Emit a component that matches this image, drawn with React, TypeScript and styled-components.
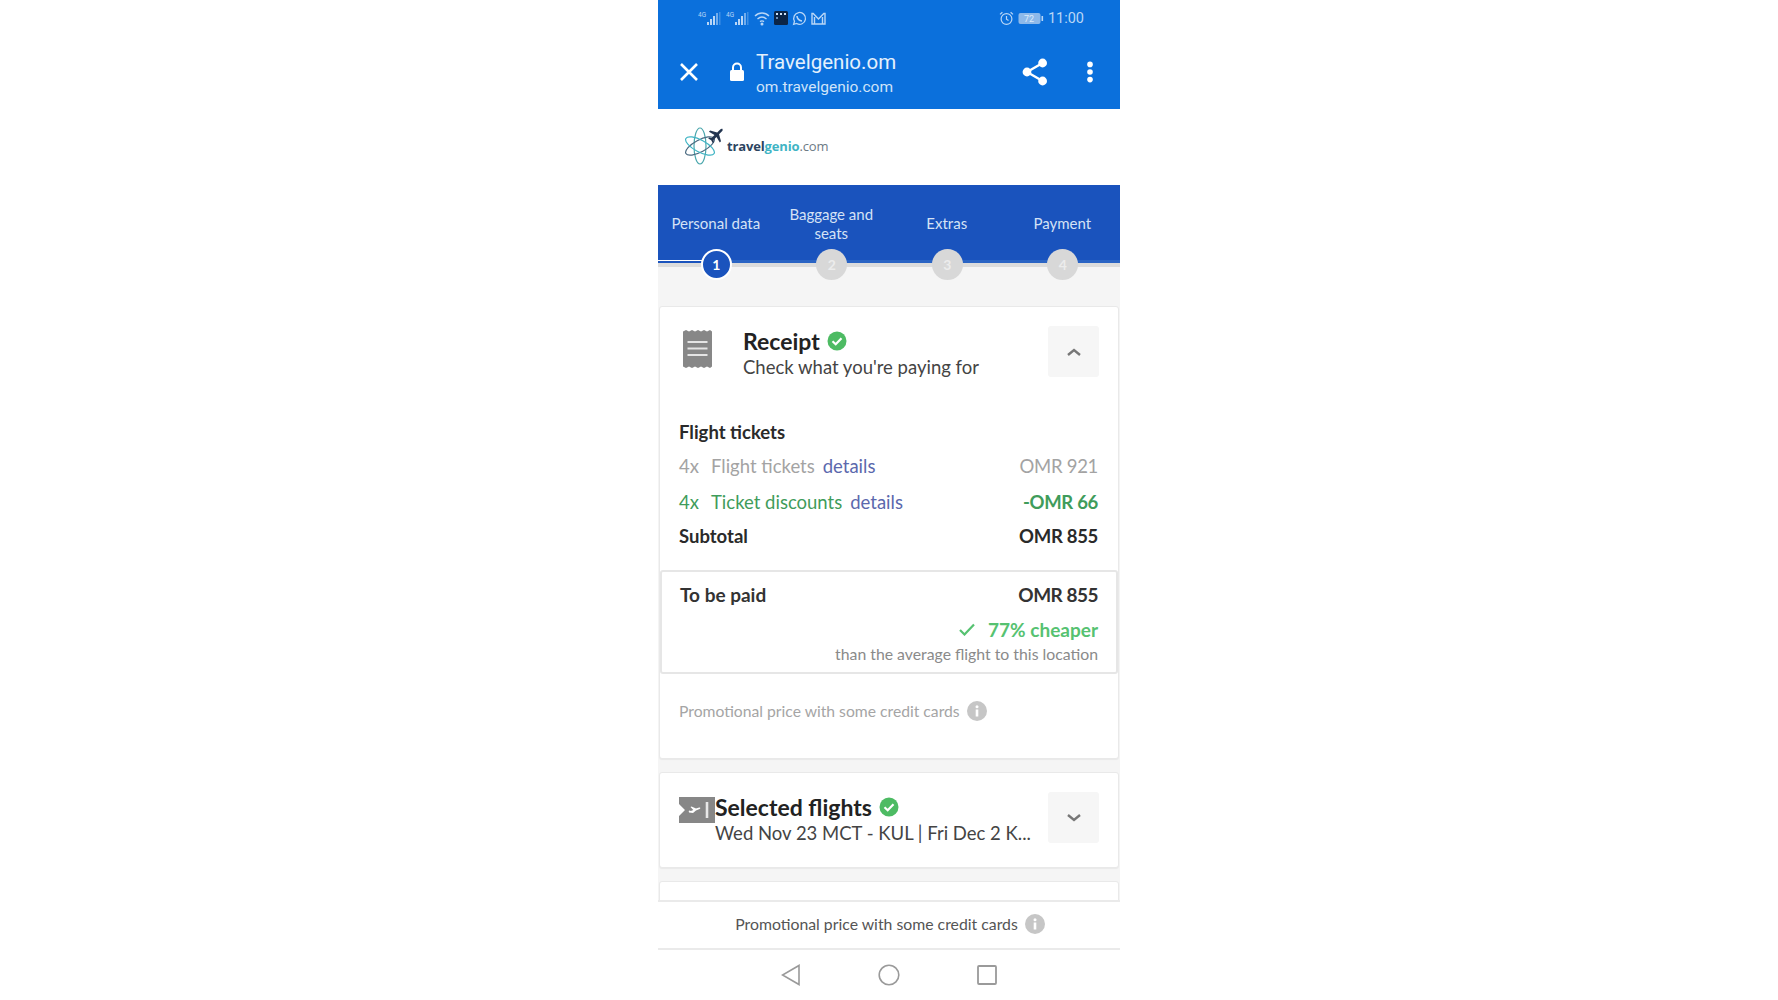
import React from 'react'
import styled, { createGlobalStyle } from 'styled-components'

const GlobalStyle = createGlobalStyle`
  html, body { margin: 0; padding: 0; background: #fff; }
  * { box-sizing: border-box; }
  body { font-family: Lato, "Noto Sans", sans-serif; }
`

const Page = styled.div`
  width: 100%;
  height: 1000px;
  display: flex;
  justify-content: center;
  overflow: hidden;
  background: #fff;
`

const Phone = styled.div`
  width: 462px;
  height: 1000px;
  display: flex;
  flex-direction: column;
  background: #f5f5f5;
  overflow: hidden;
`

const BrowserHeader = styled.header`
  height: 109px;
  flex: none;
  background: #0b70dc;
  color: #fff;
  display: flex;
  flex-direction: column;
`

const StatusBar = styled.div`
  height: 36px;
  padding: 0 36px 0 40px;
  display: flex;
  align-items: center;
  justify-content: space-between;
  color: #b9d6f6;
  font-family: Roboto, sans-serif;
  font-size: 14.5px;
`

const StatusGroup = styled.div`
  display: flex;
  align-items: center;
  gap: 4px;
`

const AppBar = styled.div`
  flex: 1;
  display: flex;
  align-items: center;
  padding: 0 26px 2px 20px;
  font-family: Roboto, sans-serif;
`

const CloseSlot = styled.span`
  display: flex;
  margin-right: 29px;
`

const ShareSlot = styled.span`
  display: flex;
  margin-right: 38px;
`

const UrlBlock = styled.div`
  flex: 1;
  margin: 3px 0 0 11px;
  display: flex;
  flex-direction: column;
  gap: 4px;
`

const SiteTitle = styled.div`
  font-size: 20.5px;
  line-height: 24px;
  color: #e4f0fc;
`

const SiteUrl = styled.div`
  font-size: 15.5px;
  line-height: 19px;
  color: #cfe3f9;
`

const LogoBar = styled.div`
  height: 76px;
  flex: none;
  background: #fff;
  display: flex;
  align-items: center;
  padding: 0 0 2px 26px;
  gap: 3px;
`

const LogoText = styled.div`
  font-family: "Open Sans", sans-serif;
  font-size: 13px;
  font-weight: 700;
  color: #2c4460;
  letter-spacing: -0.15px;
`

const LogoAccent = styled.span`
  color: #3fb4c4;
`

const LogoDomain = styled.span`
  font-weight: 400;
  color: #6d7a85;
`

const Stepper = styled.nav`
  height: 78px;
  flex: none;
  background: #1a53bd;
  display: grid;
  grid-template-columns: repeat(4, 1fr);
  position: relative;
  border-bottom: 3px solid #2a64c4;
`

const ProgressLine = styled.div`
  position: absolute;
  left: 0;
  bottom: -3px;
  width: 58px;
  height: 3px;
  background: #1a53bd;
  border-top: 1px solid #fff;
`

const TrackShadow = styled.div`
  height: 4px;
  flex: none;
  background: #dcdcdc;
`

const Step = styled.div`
  position: relative;
  display: flex;
  align-items: center;
  justify-content: center;
  text-align: center;
  padding: 2px 12px 0;
  height: 100%;
  color: #d5e2f5;
  font-size: 15px;
  line-height: 19px;
`

const StepDot = styled.span<{ $active?: boolean }>`
  position: absolute;
  left: 50%;
  bottom: -20px;
  width: 31px;
  height: 31px;
  margin-left: -15px;
  border-radius: 50%;
  display: flex;
  align-items: center;
  justify-content: center;
  font-size: 14px;
  font-weight: 700;
  z-index: 1;
  color: ${p => (p.$active ? '#fff' : '#ececec')};
  background: ${p => (p.$active ? '#1a53bd' : '#d8d8d8')};
  border: ${p => (p.$active ? '2px solid #fff' : 'none')};
`

const Scroll = styled.main`
  flex: 1;
  min-height: 0;
  padding: 39px 1px 0;
  display: flex;
  flex-direction: column;
  gap: 13px;
  overflow: hidden;
`

const Card = styled.section`
  flex: none;
  background: #fff;
  border: 1px solid #e9e9e9;
  border-radius: 3px;
  box-shadow: 0 1px 1px rgba(0, 0, 0, 0.05);
`

const ReceiptCard = styled(Card)`
  height: 453px;
  display: flex;
  flex-direction: column;
`

const FlightsCard = styled(Card)`
  height: 96px;
`

const StubCard = styled(Card)`
  height: 30px;
`

const CardHead = styled.div<{ $tight?: boolean }>`
  display: flex;
  align-items: flex-start;
  padding: ${p => (p.$tight ? '19px 19px 0 19px' : '19px 19px 0 23px')};
`

const HeadIcon = styled.div<{ $tight?: boolean }>`
  flex: none;
  width: ${p => (p.$tight ? '36px' : '60px')};
  padding-top: ${p => (p.$tight ? '5px' : '4px')};
`

const HeadText = styled.div`
  flex: 1;
  min-width: 0;
`

const TitleRow = styled.div`
  display: flex;
  align-items: center;
  gap: 7px;
  font-size: 23px;
  line-height: 30px;
  font-weight: 700;
  color: #222;
`

const Subtitle = styled.div`
  font-size: 18.5px;
  line-height: 23px;
  color: #444;
  white-space: nowrap;
`

const Toggle = styled.button`
  width: 51px;
  height: 51px;
  flex: none;
  border: none;
  background: #f6f6f6;
  border-radius: 3px;
  display: flex;
  align-items: center;
  justify-content: center;
  padding: 0;
`

const Lines = styled.div`
  padding: 41px 20px 0 19px;
`

const SectionTitle = styled.div`
  font-size: 18.5px;
  font-weight: 700;
  line-height: 24px;
  color: #2a2a2a;
  margin-bottom: 4px;
`

const Row = styled.div<{ $tone?: 'muted' | 'green' | 'dark' }>`
  display: flex;
  align-items: center;
  height: ${p => (p.$tone === 'dark' ? '32px' : '36px')};
  font-size: 18.5px;
  color: ${p => (p.$tone === 'green' ? '#3f9c5b' : p.$tone === 'dark' ? '#2a2a2a' : '#a3a3a3')};
  font-weight: ${p => (p.$tone === 'dark' ? 700 : 400)};
`

const Qty = styled.span`
  width: 32px;
  flex: none;
`

const DetailsLink = styled.a`
  color: #5b68ad;
  margin-left: 8px;
`

const Amount = styled.span<{ $bold?: boolean }>`
  margin-left: auto;
  font-weight: ${p => (p.$bold ? 700 : 400)};
  letter-spacing: -0.3px;
`

const PaidBox = styled.div`
  margin: 18px 0 0 0;
  height: 104px;
  flex: none;
  border: 2px solid #e6e6e6;
  border-radius: 3px;
  padding: 9px 18px 0 18px;
`

const PaidRow = styled.div`
  display: flex;
  justify-content: space-between;
  font-size: 19px;
  font-weight: 700;
  line-height: 27px;
  color: #333;
`

const PaidAmount = styled.span`
  letter-spacing: -0.5px;
`

const CheaperRow = styled.div`
  margin-top: 8px;
  display: flex;
  justify-content: flex-end;
  align-items: center;
  gap: 13px;
  font-size: 19px;
  line-height: 27px;
  font-weight: 700;
  color: #56c271;
`

const CheaperNote = styled.div`
  text-align: right;
  font-size: 15.8px;
  line-height: 22px;
  color: #8a8a8a;
`

const PromoLine = styled.div`
  display: flex;
  align-items: center;
  gap: 7px;
  padding: 25px 20px 0 19px;
  font-size: 15.7px;
  line-height: 24px;
  color: #a5a5a5;
`

const FooterBar = styled.div`
  height: 50px;
  flex: none;
  background: #fff;
  border-top: 2px solid #eaeaea;
  border-bottom: 2px solid #eaeaea;
  display: flex;
  align-items: center;
  justify-content: center;
  gap: 7px;
  font-size: 15.8px;
  color: #555;
  padding: 0 0 3px 2px;
`

const NavBar = styled.div`
  height: 50px;
  flex: none;
  background: #fff;
  display: grid;
  grid-template-columns: 98px 98px 98px;
  justify-content: center;
  justify-items: center;
  align-items: center;
`

const Signal = () => (
  <svg width="24" height="15" viewBox="0 0 24 15" fill="currentColor">
    <text x="0" y="6" fontSize="6.5" fontFamily="Roboto">4G</text>
    <rect x="9" y="11" width="2" height="3" />
    <rect x="12" y="8" width="2" height="6" />
    <rect x="15" y="5" width="2" height="9" />
    <rect x="18" y="2" width="2" height="12" opacity=".6" />
    <rect x="21" y="1" width="1.5" height="13" opacity=".3" />
  </svg>
)

const Wifi = () => (
  <svg width="16" height="15" viewBox="0 0 16 15" fill="none" stroke="currentColor" strokeWidth="1.4">
    <path d="M1 5c4-4 10-4 14 0M3.5 8c3-2.6 6-2.6 9 0M6 10.6c1.4-1 2.6-1 4 0" />
    <circle cx="8" cy="13" r=".8" fill="currentColor" />
  </svg>
)

const AppTile = () => (
  <svg width="14" height="14" viewBox="0 0 14 14">
    <rect width="14" height="14" rx="1.5" fill="#0b2547" />
    <rect x="2" y="2" width="2" height="2" fill="#cfe3f9" />
    <rect x="6" y="2" width="2" height="2" fill="#cfe3f9" />
    <rect x="10" y="2" width="2" height="2" fill="#cfe3f9" />
    <rect x="2" y="6" width="2" height="2" fill="#6f8fb5" />
  </svg>
)

const Whatsapp = () => (
  <svg width="15" height="15" viewBox="0 0 15 15" fill="none" stroke="currentColor" strokeWidth="1.3">
    <path d="M1.6 13.4l.9-3.1a5.9 5.9 0 1 1 2.2 2.2z" />
    <path d="M5 5c0 2.4 2.2 4.8 5 5" strokeWidth="1.6" />
  </svg>
)

const Gmail = () => (
  <svg width="15" height="13" viewBox="0 0 15 13" fill="none" stroke="currentColor" strokeWidth="1.4">
    <path d="M1 12V1.500h1.200L7.500 7l5.300-5.500H14V12zM3.500 12V5M11.500 12V5" />
  </svg>
)

const Alarm = () => (
  <svg width="15" height="15" viewBox="0 0 15 15" fill="none" stroke="currentColor" strokeWidth="1.2">
    <circle cx="7.5" cy="8" r="5.4" />
    <path d="M7.5 5v3.2l2 1.2M1 3.4 3.4 1.2M14 3.4 11.6 1.2" />
  </svg>
)

const Battery = () => (
  <svg width="26" height="13" viewBox="0 0 26 13">
    <rect x="0.5" y="1" width="22" height="11" rx="2" fill="#8db9ea" />
    <rect x="23.5" y="4" width="1.6" height="5" fill="#b9d6f6" />
    <text x="6" y="10" fontSize="9" fontFamily="Roboto" fill="#dcebfb">72</text>
  </svg>
)

const CloseIcon = () => (
  <svg width="22" height="22" viewBox="0 0 22 22" stroke="#fff" strokeWidth="2.6" fill="none">
    <path d="M3 3l16 16M19 3 3 19" />
  </svg>
)

const LockIcon = () => (
  <svg width="16" height="20" viewBox="0 0 16 20" fill="#fff">
    <path d="M4 9V5.600a4 4 0 0 1 8 0V9" fill="none" stroke="#fff" strokeWidth="2" />
    <rect x="1" y="8" width="14" height="11" rx="1.5" />
  </svg>
)

const ShareIcon = () => (
  <svg width="26" height="28" viewBox="0 0 26 28" fill="#fff">
    <circle cx="5" cy="14" r="4.4" />
    <circle cx="20.6" cy="5" r="4.4" />
    <circle cx="20.6" cy="23" r="4.4" />
    <path d="M5 14 20.6 5M5 14l15.6 9" stroke="#fff" strokeWidth="2.4" />
  </svg>
)

const DotsIcon = () => (
  <svg width="8" height="22" viewBox="0 0 8 22" fill="#fff">
    <circle cx="4" cy="3.4" r="2.8" />
    <circle cx="4" cy="11" r="2.8" />
    <circle cx="4" cy="18.6" r="2.8" />
  </svg>
)

const AtomLogo = () => (
  <svg width="40" height="38" viewBox="0 0 40 38" fill="none">
    <g transform="translate(16 19)" strokeWidth="1.2">
      <ellipse rx="6" ry="18" stroke="#4ba7ad" />
      <ellipse rx="6" ry="16" stroke="#4a6a80" transform="rotate(62)" />
      <ellipse rx="6" ry="16" stroke="#3fb4c4" transform="rotate(-62)" />
    </g>
    <path
      d="M39 2.200c-.8-.8-2-.5-2.800.3l-3 3-7-2-1.300 1.200 5.600 3.300-3 3-2.300-.4-1 1 3 1.600 1.700 3 1-1-.4-2.300 3-3 3.300 5.600 1.200-1.300-2-7 3-3c.8-.8 1-2 0-2.800z"
      fill="#22344f"
    />
  </svg>
)

const Check = () => (
  <svg width="20" height="20" viewBox="0 0 20 20">
    <circle cx="10" cy="10" r="9.5" fill="#4dbb63" />
    <path d="M5.500 10.300 8.700 13.300 14.500 7.200" fill="none" stroke="#fff" strokeWidth="2.2" />
  </svg>
)

const ReceiptIcon = () => (
  <svg width="29" height="38" viewBox="0 0 29 38">
    <path
      d="M0 1.500 3 0l3 1.500L9 0l3 1.500L15 0l3 1.500L21 0l3 1.500L27 0l2 1.500v35L27 38l-3-1.500L21 38l-3-1.500L15 38l-3-1.500L9 38l-3-1.500L3 38l-3-1.500z"
      fill="#878787"
    />
    <path d="M4.500 12h20M4.500 18.500h20M4.500 25h20" stroke="#e4e4e4" strokeWidth="2" />
  </svg>
)

const TicketIcon = () => (
  <svg width="36" height="26" viewBox="0 0 36 26">
    <path d="M0 0h36v26H0v-7l6-6-6-6z" fill="#878787" />
    <path d="M10 15.500l4 .5 3-2.500 3.600-1.500c1.200-.6 1-1.700-.4-1.400l-3.200 1-4.500-2.100-1 .5 2.800 2.900-2.400 1.100-1.400-.6-.8.500z" fill="#fff" />
    <path d="M28 5v16" stroke="#e8e8e8" strokeWidth="2.6" />
  </svg>
)

const Chevron = ({ up }: { up?: boolean }) => (
  <svg width="14" height="8" viewBox="0 0 14 8" fill="none" stroke="#777" strokeWidth="2.4">
    <path d={up ? 'M1 7 7 2l6 5' : 'M1 1l6 5 6-5'} />
  </svg>
)

const Tick = () => (
  <svg width="16" height="13" viewBox="0 0 16 13" fill="none" stroke="#56c271" strokeWidth="2.2">
    <path d="M1 7l4.500 4.500L15 1.500" />
  </svg>
)

const InfoIcon = () => (
  <svg width="20" height="20" viewBox="0 0 20 20">
    <circle cx="10" cy="10" r="10" fill="#c6c6c6" />
    <rect x="8.700" y="8.500" width="2.6" height="7" fill="#fff" />
    <circle cx="10" cy="5.700" r="1.5" fill="#fff" />
  </svg>
)

const NavBack = () => (
  <svg width="20" height="22" viewBox="0 0 20 22" fill="none" stroke="#9a9a9a" strokeWidth="1.6">
    <path d="M18 1.500v19L1.500 11z" />
  </svg>
)

const NavHome = () => (
  <svg width="22" height="22" viewBox="0 0 22 22" fill="none" stroke="#9a9a9a" strokeWidth="1.6">
    <circle cx="11" cy="11" r="9.8" />
  </svg>
)

const NavRecents = () => (
  <svg width="20" height="20" viewBox="0 0 20 20" fill="none" stroke="#9a9a9a" strokeWidth="1.8">
    <rect x="1" y="1" width="18" height="18" rx="1" />
  </svg>
)

const steps = ['Personal data', 'Baggage and seats', 'Extras', 'Payment']

export default function App() {
  return (
    <Page>
      <GlobalStyle />
      <Phone>
        <BrowserHeader>
          <StatusBar>
            <StatusGroup>
              <Signal />
              <Signal />
              <Wifi />
              <AppTile />
              <Whatsapp />
              <Gmail />
            </StatusGroup>
            <StatusGroup>
              <Alarm />
              <Battery />
              <span>11:00</span>
            </StatusGroup>
          </StatusBar>
          <AppBar>
            <CloseSlot>
              <CloseIcon />
            </CloseSlot>
            <LockIcon />
            <UrlBlock>
              <SiteTitle>Travelgenio.om</SiteTitle>
              <SiteUrl>om.travelgenio.com</SiteUrl>
            </UrlBlock>
            <ShareSlot>
              <ShareIcon />
            </ShareSlot>
            <DotsIcon />
          </AppBar>
        </BrowserHeader>
        <LogoBar>
          <AtomLogo />
          <LogoText>
            travel<LogoAccent>genio</LogoAccent>
            <LogoDomain>.com</LogoDomain>
          </LogoText>
        </LogoBar>
        <Stepper>
          <ProgressLine />
          {steps.map((label, i) => (
            <Step key={label}>
              {label}
              <StepDot $active={i === 0}>{i + 1}</StepDot>
            </Step>
          ))}
        </Stepper>
        <TrackShadow />
        <Scroll>
          <ReceiptCard>
            <CardHead>
              <HeadIcon>
                <ReceiptIcon />
              </HeadIcon>
              <HeadText>
                <TitleRow>
                  Receipt <Check />
                </TitleRow>
                <Subtitle>Check what you're paying for</Subtitle>
              </HeadText>
              <Toggle>
                <Chevron up />
              </Toggle>
            </CardHead>
            <Lines>
              <SectionTitle>Flight tickets</SectionTitle>
              <Row $tone="muted">
                <Qty>4x</Qty>
                Flight tickets
                <DetailsLink>details</DetailsLink>
                <Amount>OMR 921</Amount>
              </Row>
              <Row $tone="green">
                <Qty>4x</Qty>
                Ticket discounts
                <DetailsLink>details</DetailsLink>
                <Amount $bold>-OMR 66</Amount>
              </Row>
              <Row $tone="dark">
                Subtotal
                <Amount $bold>OMR 855</Amount>
              </Row>
            </Lines>
            <PaidBox>
              <PaidRow>
                <span>To be paid</span>
                <PaidAmount>OMR 855</PaidAmount>
              </PaidRow>
              <CheaperRow>
                <Tick />
                77% cheaper
              </CheaperRow>
              <CheaperNote>than the average flight to this location</CheaperNote>
            </PaidBox>
            <PromoLine>
              Promotional price with some credit cards <InfoIcon />
            </PromoLine>
          </ReceiptCard>
          <FlightsCard>
            <CardHead $tight>
              <HeadIcon $tight>
                <TicketIcon />
              </HeadIcon>
              <HeadText>
                <TitleRow>
                  Selected flights <Check />
                </TitleRow>
                <Subtitle>Wed Nov 23 MCT - KUL | Fri Dec 2 K...</Subtitle>
              </HeadText>
              <Toggle>
                <Chevron />
              </Toggle>
            </CardHead>
          </FlightsCard>
          <StubCard />
        </Scroll>
        <FooterBar>
          Promotional price with some credit cards <InfoIcon />
        </FooterBar>
        <NavBar>
          <NavBack />
          <NavHome />
          <NavRecents />
        </NavBar>
      </Phone>
    </Page>
  )
}
